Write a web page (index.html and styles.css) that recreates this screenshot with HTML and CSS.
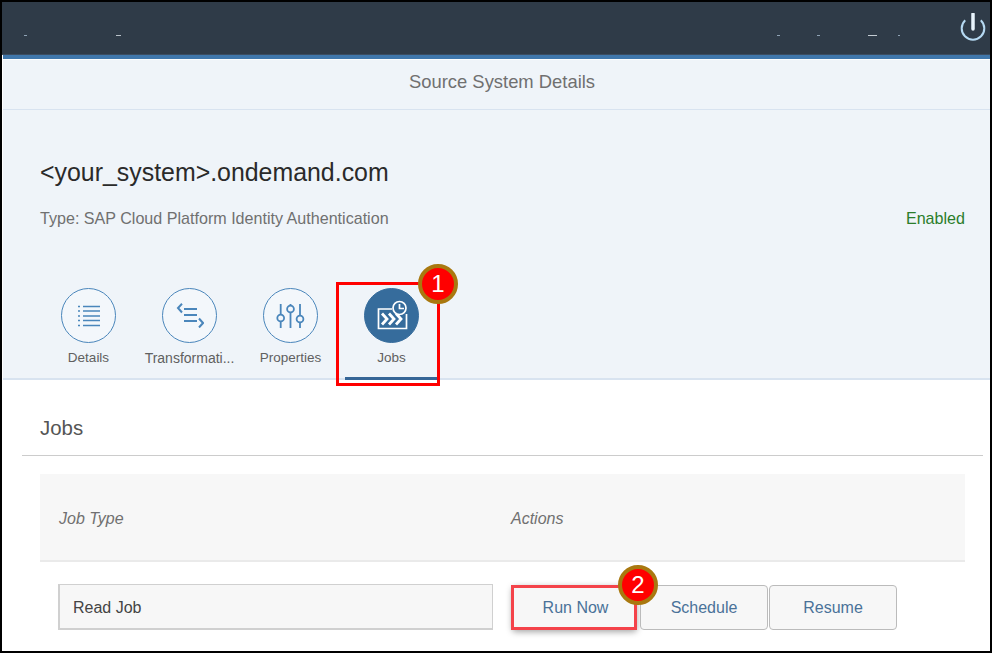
FILE: index.html
```html
<!DOCTYPE html>
<html lang="en">
<head>
<meta charset="utf-8">
<title>Source System Details</title>
<link rel="stylesheet" href="styles.css">
</head>
<body>
<div class="frame">
  <header class="shell">
    <i class="mark m1"></i><i class="mark m2"></i><i class="mark m3"></i><i class="mark m4"></i><i class="mark m5"></i><i class="mark m6"></i>
    <svg class="power" width="26" height="28" viewBox="0 0 26 28" fill="none">
      <path d="M5.200 7.200A11.300 11.300 0 1 0 20.800 7.200" stroke="#b5d9f2" stroke-width="2"/>
      <path d="M13 1V16" stroke="#e8f4fc" stroke-width="3.500" stroke-linecap="round"/>
    </svg>
  </header>
  <div class="body">
    <div class="bluebar"></div>
    <section class="panel">
      <div class="title">Source System Details</div>
      <div class="head">
        <h1 class="name">&lt;your_system&gt;.ondemand.com</h1>
        <div class="meta"><span>Type: SAP Cloud Platform Identity Authentication</span><span class="ok">Enabled</span></div>
      </div>
      <nav class="tabs">
        <div class="tab">
          <span class="circle">
            <svg width="22" height="22" viewBox="0 0 22 22" fill="none" stroke="#4a86bb"><path d="M5 1.500H22M5 6H22M5 11H22M5 15.500H22M5 20.500H22" stroke-width="1.600"/><path d="M0 1.500H2M0 6H2M0 11H2M0 15.500H2M0 20.500H2" stroke-width="1.600"/></svg>
          </span>
          <span class="label">Details</span>
        </div>
        <div class="tab">
          <span class="circle">
            <svg width="28" height="25" viewBox="0 0 28 25" fill="none" stroke="#4a86bb" stroke-width="2"><path d="M6 .8 2 5l4 4.500"/><path d="M8 6H21M8 12H21M8 18H21"/><path d="m23 15.500 4 4.500-4 4.500"/></svg>
          </span>
          <span class="label wide">Transformati...</span>
        </div>
        <div class="tab">
          <span class="circle">
            <svg width="29" height="24" viewBox="0 0 29 24" fill="none" stroke="#4a86bb" stroke-width="1.800"><path d="M4.700 0V10.500M4.700 17.500V24M14.500 0V1.500M14.500 8.500V24M24 0V11.500M24 18.500V24"/><circle cx="4.700" cy="14" r="3.400"/><circle cx="14.500" cy="5" r="3.400"/><circle cx="24" cy="15" r="3.400"/></svg>
          </span>
          <span class="label">Properties</span>
        </div>
        <div class="tab active">
          <span class="circle fill">
            <svg width="32" height="31" viewBox="0 0 32 31" fill="none" stroke="#fff" stroke-width="1.700"><path d="M16 9H2.500V28.500H30.500V14"/><path d="M6 13.500 11 19 6 24.500M13 13.500 18 19 13 24.500M20 13.500 25 19 20 24.500" stroke-width="2.800"/><circle cx="23.500" cy="8" r="6.500" fill="#366c9c"/><path d="M23.500 4V8.500H28"/></svg>
          </span>
          <span class="label">Jobs</span>
        </div>
      </nav>
    </section>
    <section class="jobs">
      <h2 class="jobs-title">Jobs</h2>
      <div class="table-head"><span class="col-a">Job Type</span><span>Actions</span></div>
      <div class="row">
        <div class="field">Read Job</div>
        <div class="actions">
          <button class="btn run">Run Now</button>
          <button class="btn sched">Schedule</button>
          <button class="btn">Resume</button>
        </div>
      </div>
    </section>
  </div>
  <div class="callout box1"></div>
  <div class="callout box2"></div>
  <div class="badge b1">1</div>
  <div class="badge b2">2</div>
</div>
</body>
</html>
```
FILE: styles.css
```css
* { box-sizing: border-box; }
html, body { margin: 0; padding: 0; background: #fff; }
body { font-family: "Liberation Sans", Arial, sans-serif; color: #333; }
.frame { position: relative; width: 992px; height: 653px; border: 2px solid #000; overflow: hidden; }

.shell { position: relative; display: flex; align-items: flex-start; height: 53px; background: #2f3b48; border-bottom: 1px solid #3c4d60; }
.mark { display: block; height: 1px; margin-top: 33px; background: #8fa3b5; }
.m1 { width: 3px; margin-left: 22px; }
.m2 { width: 5px; margin-left: 89px; background: #b9c2c9; }
.m3 { width: 3px; margin-left: 656px; }
.m4 { width: 3px; margin-left: 37px; }
.m5 { width: 9px; margin-left: 48px; background: #c4ccd3; }
.m6 { width: 2px; margin-left: 21px; }
.power { margin: 11px 0 0 60px; }

.body { padding-left: 1px; }
.bluebar { height: 4px; background: #4077ab; margin-bottom: 1px; }

.panel { background: #eff4f9; border-bottom: 2px solid #d8e3f0; height: 320px; }
.title { height: 50px; padding-top: 11px; text-align: center; font-size: 18.400px; line-height: 22px; color: #707070; border-bottom: 1px solid #d8e3f0; text-indent: 11px; }
.head { padding: 47px 25px 0 37px; }
.name { margin: 0; font-size: 24.900px; line-height: 30px; font-weight: 400; color: #2a2a2a; }
.meta { display: flex; justify-content: space-between; margin-top: 22px; font-size: 16.100px; line-height: 18px; color: #707070; }
.ok { color: #2b7d2b; }

.tabs { display: flex; padding: 61px 0 0 35px; }
.tab { position: relative; width: 101px; display: flex; flex-direction: column; align-items: center; height: 92px; }
.circle { width: 55px; height: 55px; border-radius: 50%; border: 1px solid #4a86bb; background: #f3f7fb; display: flex; align-items: center; justify-content: center; }
.circle.fill { background: #366c9c; border-color: #366c9c; }
.label { margin-top: 7px; font-size: 13.500px; line-height: 16px; color: #606060; white-space: nowrap; }
.wide { font-size: 14px; }
.active::after { content: ""; position: absolute; left: 4px; right: 3px; bottom: 0; height: 3px; background: #366697; }

.jobs { padding: 0 7px 0 19px; }
.jobs-title { margin: 0; height: 76px; padding: 35px 0 0 18px; font-size: 20.400px; line-height: 26px; font-weight: 400; color: #555; border-bottom: 1px solid #ccc; }
.table-head { display: flex; align-items: center; height: 88px; margin: 18px 18px 0 18px; padding-top: 3px; background: #f7f7f7; border-bottom: 2px solid #eaeaea; font-size: 16px; font-style: italic; color: #707070; }
.col-a { width: 471px; padding-left: 19px; }
.row { display: flex; margin: 22px 18px 0 36px; }
.field { width: 435px; height: 46px; padding-left: 13px; border: 1px solid #d0d0d0; border-width: 1px 1px 2px 2px; background: #f7f7f7; font-size: 16px; line-height: 45px; color: #444; }
.actions { display: flex; margin: 1px 0 0 19px; }
.btn { width: 128px; height: 45px; padding: 0; border: 1px solid #bbb; border-radius: 4px; background: #f7f7f7; font: 16px "Liberation Sans", Arial, sans-serif; color: #4a7299; }
.run { width: 125px; margin-right: 3px; padding-left: 2px; box-shadow: 0 2px 6px rgba(0,0,0,.35); }
.sched { margin-right: 1px; }

.callout { position: absolute; border: 3px solid #f00; }
.box1 { left: 334px; top: 280px; width: 104px; height: 104px; }
.box2 { left: 509px; top: 583px; width: 126px; height: 45px; border-color: #f4434a; }
.badge { position: absolute; width: 40px; height: 40px; border-radius: 50%; background: #f00; border: 4px solid #a9780f; color: #fff; font-size: 24px; line-height: 32px; text-align: center; }
.b1 { left: 416px; top: 262px; }
.b2 { left: 616px; top: 563px; }
```
